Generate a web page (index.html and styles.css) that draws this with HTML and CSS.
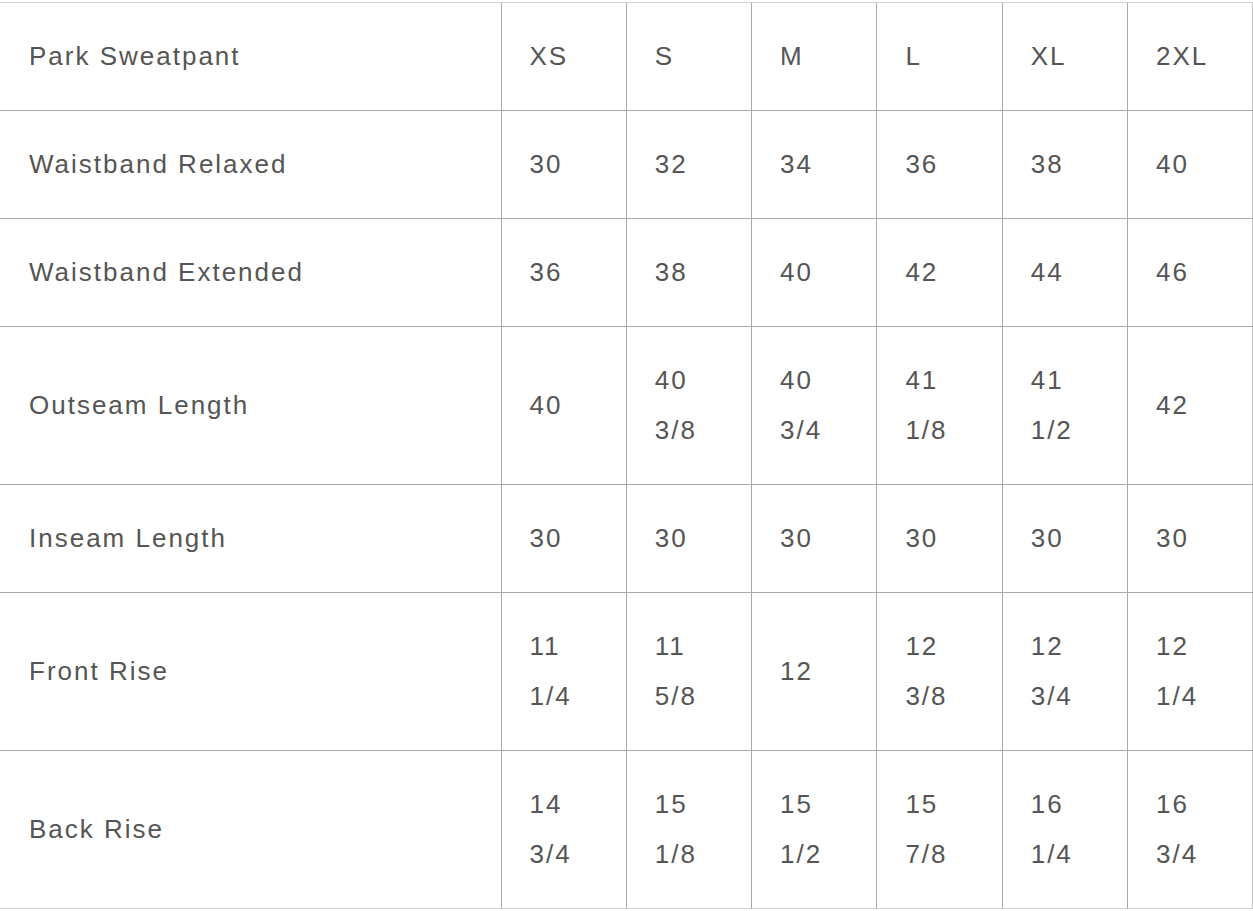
FILE: index.html
```html
<!DOCTYPE html>
<html>
<head>
<meta charset="utf-8">
<link rel="stylesheet" href="styles.css">
</head>
<body>
<table class="size-table">
  <colgroup>
    <col class="col-label">
    <col class="col-size"><col class="col-size"><col class="col-size">
    <col class="col-size"><col class="col-size"><col class="col-size">
  </colgroup>
  <tr><td>Park Sweatpant</td><td>XS</td><td>S</td><td>M</td><td>L</td><td>XL</td><td>2XL</td></tr>
  <tr><td>Waistband Relaxed</td><td>30</td><td>32</td><td>34</td><td>36</td><td>38</td><td>40</td></tr>
  <tr><td>Waistband Extended</td><td>36</td><td>38</td><td>40</td><td>42</td><td>44</td><td>46</td></tr>
  <tr><td>Outseam Length</td><td>40</td><td>40 3/8</td><td>40 3/4</td><td>41 1/8</td><td>41 1/2</td><td>42</td></tr>
  <tr><td>Inseam Length</td><td>30</td><td>30</td><td>30</td><td>30</td><td>30</td><td>30</td></tr>
  <tr><td>Front Rise</td><td>11 1/4</td><td>11 5/8</td><td>12</td><td>12 3/8</td><td>12 3/4</td><td>12 1/4</td></tr>
  <tr><td>Back Rise</td><td>14 3/4</td><td>15 1/8</td><td>15 1/2</td><td>15 7/8</td><td>16 1/4</td><td>16 3/4</td></tr>
</table>
</body>
</html>
```

FILE: styles.css
```css
html, body {
  margin: 0;
  padding: 0;
  background: #ffffff;
}

body {
  padding-top: 2px;
}

.size-table {
  width: 1253px;
  border-collapse: collapse;
  table-layout: fixed;
  font-family: "Liberation Sans", Arial, sans-serif;
  font-size: 26px;
  letter-spacing: 2px;
  color: #555555;
  border-top: 1px solid #d2d2d2;
  border-bottom: 1px solid #d2d2d2;
  border-right: 1px solid #c4c4c4;
}

.col-label {
  width: 501px;
}

.col-size {
  width: 125.3px;
}

.size-table td {
  border-top: 1px solid #aaaaaa;
  border-left: 1px solid #aaaaaa;
  padding: 28px 28px 29px 28px;
  line-height: 50px;
  vertical-align: middle;
  text-align: left;
}

.size-table tr:first-child td {
  border-top: 1px solid #d2d2d2;
}

.size-table td:first-child {
  border-left: none;
  padding-left: 29px;
}
```
